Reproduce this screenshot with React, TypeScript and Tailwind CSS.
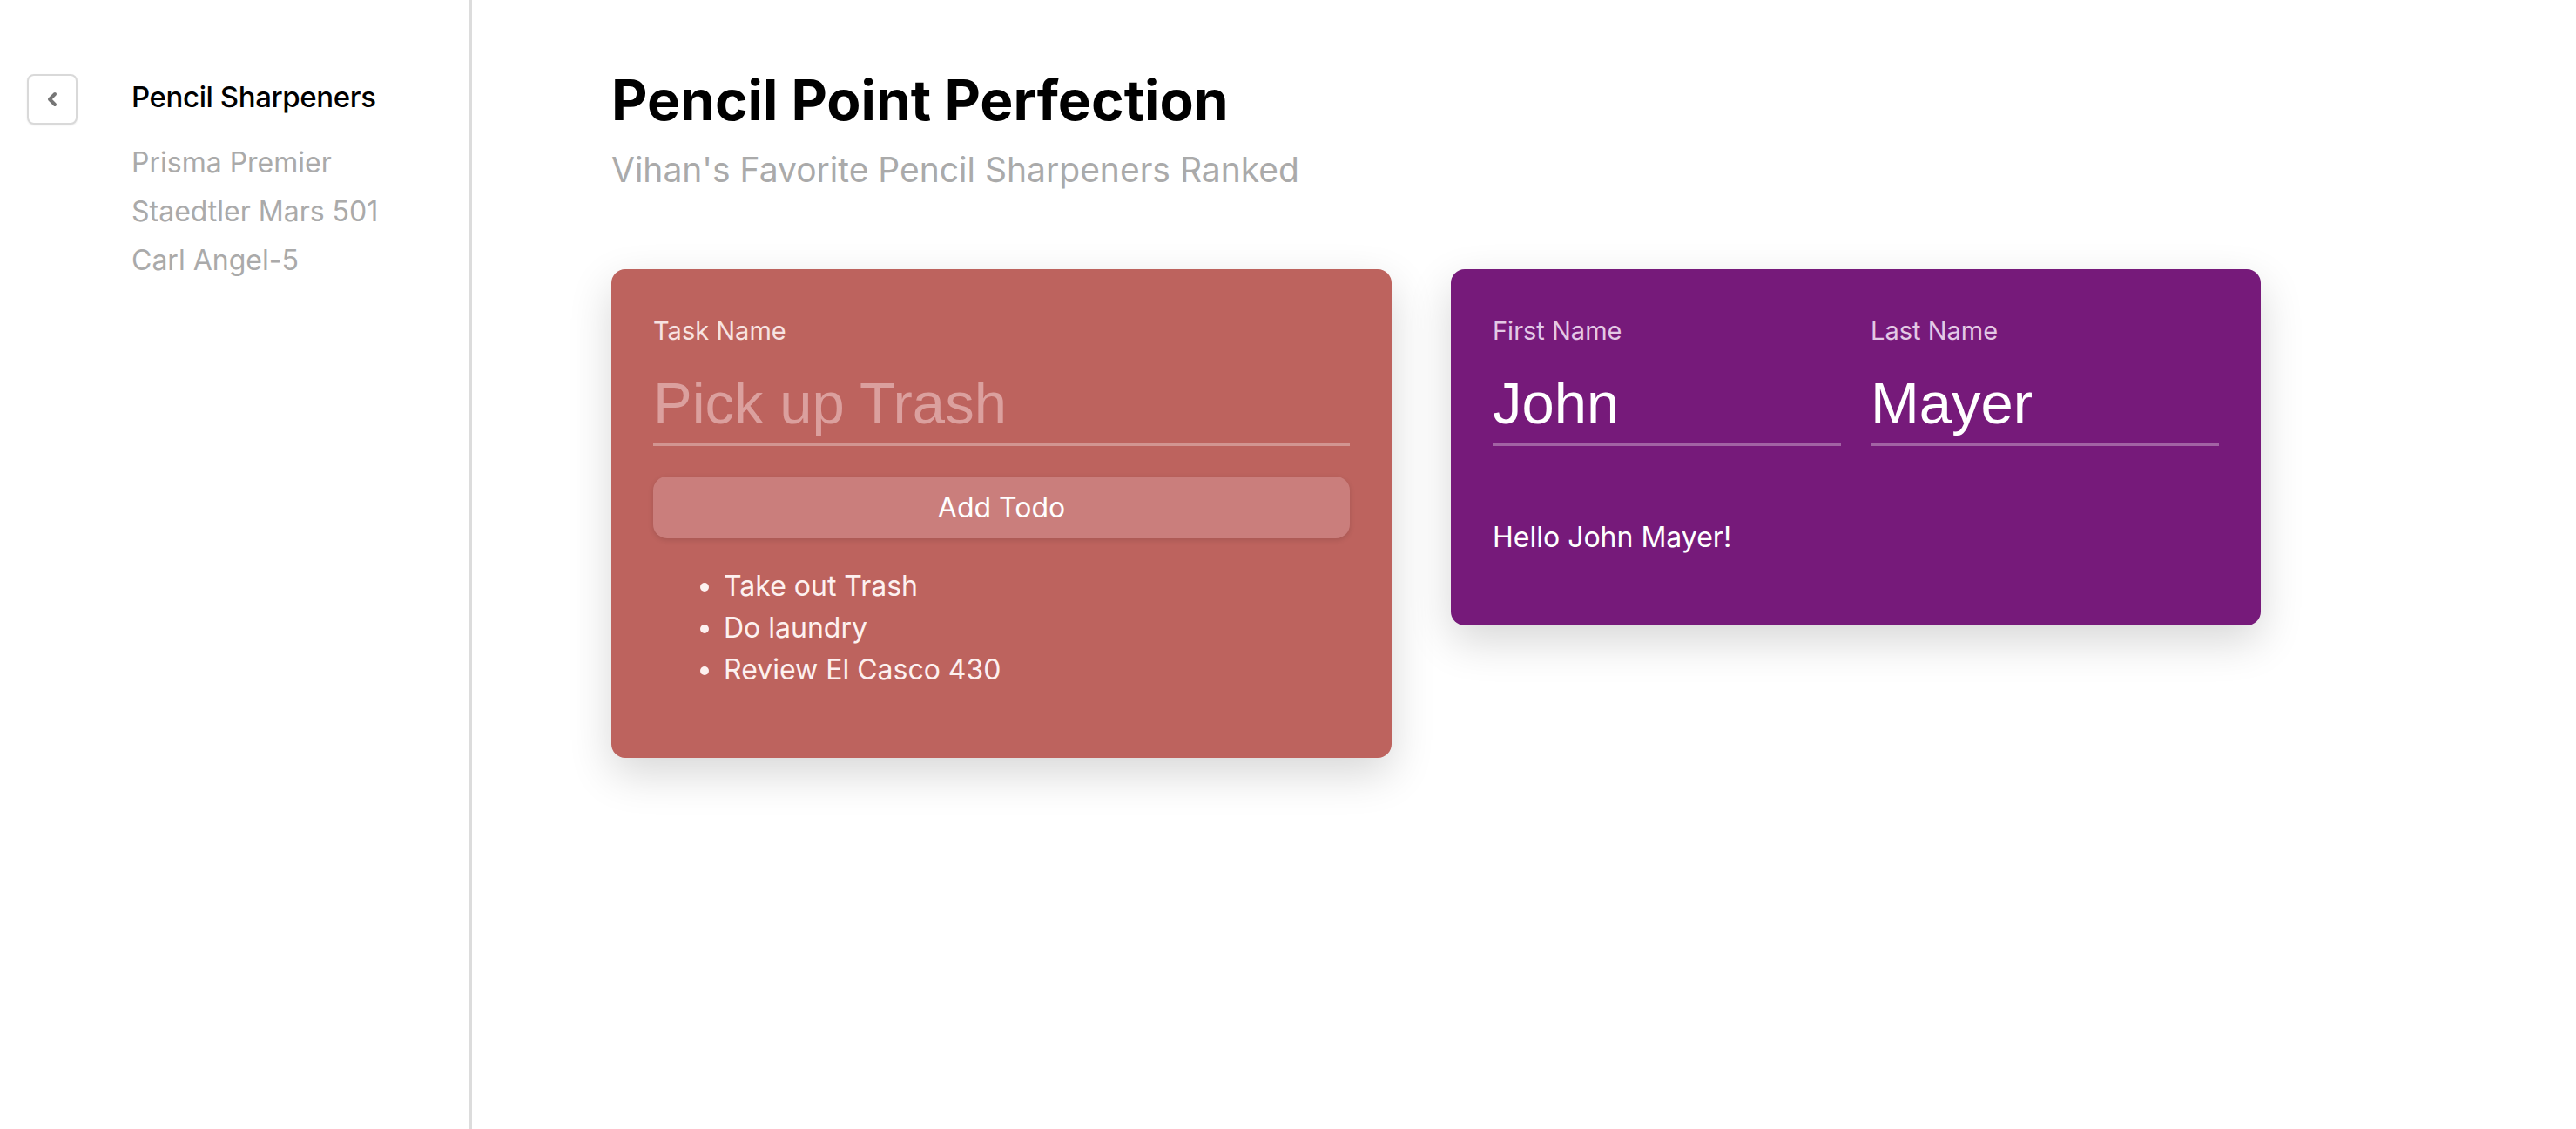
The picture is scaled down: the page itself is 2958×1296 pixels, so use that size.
import React from "react";

const sf = { fontFamily: "Inter, 'Noto Sans', sans-serif" };

function BackButton() {
  return (
    <button className="flex h-[58px] w-[58px] shrink-0 items-center justify-center rounded-[8px] border-2 border-[#d9d9d9] bg-white shadow-[0_1px_2px_rgba(0,0,0,0.08)]">
      <svg width="18" height="20" viewBox="0 0 18 20">
        <polyline points="12,4 6,10 12,16" fill="none" stroke="#767676" strokeWidth="4" strokeLinecap="round" strokeLinejoin="round" />
      </svg>
    </button>
  );
}

function UnderlineInput({ value, placeholder, placeholderClass }: { value?: string; placeholder?: string; placeholderClass?: string }) {
  return (
    <input
      readOnly
      value={value ?? ""}
      placeholder={placeholder}
      className={`mt-[26px] block h-[88px] w-full border-0 border-b-[4px] border-solid border-[rgba(255,255,255,0.32)] bg-transparent p-0 pb-[8px] text-[67px] leading-[76px] text-white outline-none ${placeholderClass ?? ""}`}
      style={{ fontFamily: "'Liberation Sans', Arial, sans-serif" }}
    />
  );
}

export default function App() {
  return (
    <div className="flex h-[1296px] w-full bg-white" style={sf}>
      <aside className="flex w-[538px] shrink-0 items-start pl-[31px] pt-[85px]">
        <BackButton />
        <div className="ml-[62px] mt-[4px]">
          <div className="text-[33px] font-medium leading-[44px] tracking-[-0.4px] text-black">Pencil Sharpeners</div>
          <ul className="mt-[26px] text-[32px] leading-[56px] text-[#aaaaaa]">
            <li>Prisma Premier</li>
            <li>Staedtler Mars 501</li>
            <li>Carl Angel-5</li>
          </ul>
        </div>
      </aside>
      <div className="w-[4px] shrink-0 bg-[#dcdcdc]" />
      <main className="flex-1 pl-[160px] pt-[77px]">
        <h1 className="text-[64px] font-bold leading-[76px] text-black">Pencil Point Perfection</h1>
        <p className="mt-[18px] text-[39px] leading-[48px] text-[#aaaaaa]">Vihan's Favorite Pencil Sharpeners Ranked</p>

        <div className="mt-[90px] flex items-start gap-[68px]">
          <section className="w-[896px] rounded-[16px] bg-[#bd635e] px-[48px] pb-[77px] pt-[53px] shadow-[0_18px_50px_rgba(0,0,0,0.16)]">
            <label className="block text-[29px] leading-[36px] text-[#f7e3e2]">Task Name</label>
            <UnderlineInput placeholder="Pick up Trash" placeholderClass="placeholder:text-[#dba09e]" />
            <button className="mt-[35px] flex h-[71px] w-full items-center justify-center rounded-[16px] bg-[#ca7e7c] text-[32px] text-white shadow-[0_2px_6px_rgba(0,0,0,0.12)]">
              Add Todo
            </button>
            <ul className="mt-[31px] list-disc pl-[81px] text-[32px] leading-[48px] text-[#fdf1f0] marker:text-[#fdf1f0]">
              <li>Take out Trash</li>
              <li>Do laundry</li>
              <li>Review El Casco 430</li>
            </ul>
          </section>

          <section className="w-[930px] rounded-[16px] bg-[#761a7a] px-[48px] pb-[77px] pt-[53px] shadow-[0_18px_50px_rgba(0,0,0,0.16)]">
            <div className="grid grid-cols-2 gap-[34px]">
              <div>
                <label className="block text-[29px] leading-[36px] text-[#e3c9e5]">First Name</label>
                <UnderlineInput value="John" />
              </div>
              <div>
                <label className="block text-[29px] leading-[36px] text-[#e3c9e5]">Last Name</label>
                <UnderlineInput value="Mayer" />
              </div>
            </div>
            <p className="mt-[81px] text-[32px] leading-[48px] text-white">Hello John Mayer!</p>
          </section>
        </div>
      </main>
    </div>
  );
}
